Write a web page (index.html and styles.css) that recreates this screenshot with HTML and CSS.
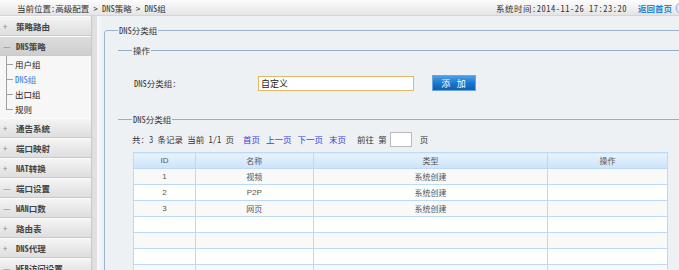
FILE: index.html
```html
<!DOCTYPE html>
<html lang="zh-CN">
<head>
    <meta charset="UTF-8">
    <title>DNS组</title>
    <link rel="stylesheet" href="styles.css">
</head>
<body>
<div class="page">
    <div class="topbar">
        <span class="crumb">当前位置:高级配置 &gt; DNS策略 &gt; DNS组</span>
        <span class="topright">
            <span class="systime">系统时间:2014-11-26 17:23:20</span>
            <a class="home" href="#">返回首页</a>
            <svg class="home-icon" width="12" height="12" viewBox="0 0 12 12">
                <circle cx="6" cy="6" r="5" fill="#d6e9fa" stroke="#7db6e6"/>
            </svg>
        </span>
    </div>

    <div class="wrap">
        <div class="sidebar">
            <div class="nav-item"><span class="ico">+</span>策略路由</div>
            <div class="nav-item open"><span class="ico">—</span>DNS策略</div>
            <ul class="subnav">
                <li>用户组</li>
                <li class="active">DNS组</li>
                <li>出口组</li>
                <li>规则</li>
            </ul>
            <div class="nav-item"><span class="ico">+</span>通告系统</div>
            <div class="nav-item"><span class="ico">+</span>端口映射</div>
            <div class="nav-item"><span class="ico">+</span>NAT转换</div>
            <div class="nav-item"><span class="ico">—</span>端口设置</div>
            <div class="nav-item"><span class="ico">—</span>WAN口数</div>
            <div class="nav-item"><span class="ico">+</span>路由表</div>
            <div class="nav-item"><span class="ico">+</span>DNS代理</div>
            <div class="nav-item"><span class="ico">—</span>WEB访问设置</div>
        </div>
        <div class="splitter"></div>

        <div class="main">
            <fieldset class="box">
                <legend>DNS分类组</legend>

                <fieldset class="section">
                    <legend>操作</legend>
                    <div class="form-row">
                        <span class="label">DNS分类组:</span>
                        <input class="txt" type="text" value="自定义">
                        <button class="btn">添 加</button>
                    </div>
                </fieldset>

                <fieldset class="section">
                    <legend>DNS分类组</legend>
                    <div class="pager">
                        <span class="total">共: 3 条记录 当前 1/1 页</span>
                        <a href="#" class="first">首页</a>
                        <a href="#">上一页</a>
                        <a href="#">下一页</a>
                        <a href="#">末页</a>
                        <span class="goto">前往 第</span>
                        <input class="page-no" type="text">
                        <span>页</span>
                    </div>

                    <table class="grid">
                        <tr>
                            <th class="c-id">ID</th>
                            <th class="c-name">名称</th>
                            <th class="c-type">类型</th>
                            <th class="c-op">操作</th>
                        </tr>
                        <tr><td>1</td><td>视频</td><td>系统创建</td><td></td></tr>
                        <tr><td>2</td><td>P2P</td><td>系统创建</td><td></td></tr>
                        <tr><td>3</td><td>网页</td><td>系统创建</td><td></td></tr>
                        <tr><td></td><td></td><td></td><td></td></tr>
                        <tr><td></td><td></td><td></td><td></td></tr>
                        <tr><td></td><td></td><td></td><td></td></tr>
                        <tr><td></td><td></td><td></td><td></td></tr>
                        <tr><td></td><td></td><td></td><td></td></tr>
                    </table>
                </fieldset>
            </fieldset>
        </div>
    </div>
</div>
</body>
</html>
```

FILE: styles.css
```css
* {
    box-sizing: border-box;
}
html, body {
    margin: 0;
    padding: 0;
    overflow: hidden;
}
body {
    font-family: "Noto Sans Mono CJK SC", "Liberation Mono", "Noto Sans CJK SC", monospace;
    font-size: 8.5px;
    color: #333;
    background: #eef1f4;
}
.page {
    width: 700px;
    height: 270px;
}
a {
    text-decoration: none;
}

/* barra superior */
.topbar {
    height: 16px;
    display: flex;
    align-items: center;
    justify-content: space-between;
    padding: 0 13px 0 17px;
    background: linear-gradient(#fdfdfd, #e4e4e4);
    border-bottom: 1px solid #d2d6da;
    line-height: 12px;
}
.topright {
    display: flex;
    align-items: center;
}
.systime {
    margin-right: 11px;
    letter-spacing: 0.5px;
}
.home {
    color: #2a86d4;
    font-weight: bold;
}
.home-icon {
    margin-left: 3px;
}

.wrap {
    display: flex;
    height: 254px;
}

/* menu lateral */
.sidebar {
    width: 91px;
    background: #f6f6f6;
}
.nav-item {
    height: 20px;
    line-height: 19px;
    padding-left: 3px;
    font-weight: bold;
    color: #444;
    background: linear-gradient(#f4f4f4, #dedede);
    border-top: 1px solid #fbfbfb;
    border-bottom: 1px solid #c9c9c9;
    white-space: nowrap;
}
.nav-item.open:nth-child(2) {
    background: linear-gradient(#dcdcdc, #cfcfcf);
}
.ico {
    display: inline-block;
    width: 13px;
    color: #888;
    font-weight: normal;
}
.subnav {
    list-style: none;
    margin: 0;
    padding: 1px 0;
    height: 62px;
    background: #f7f7f7;
    position: relative;
}
.subnav::before {
    content: "";
    position: absolute;
    left: 6px;
    top: 0;
    height: 54px;
    border-left: 1px solid #a0a0a0;
}
.subnav li {
    position: relative;
    height: 15px;
    line-height: 15px;
    padding-left: 15px;
    color: #222;
}
.subnav li::before {
    content: "";
    position: absolute;
    left: 6px;
    top: 7px;
    width: 7px;
    border-top: 1px solid #a0a0a0;
}
.subnav li.active {
    color: #2f7fd0;
}

.splitter {
    width: 9px;
    background: linear-gradient(to right, #c9c9c9 0, #c9c9c9 1px, #dedede 1px, #e2e2e2 6px, #f6f7f8 6px);
}

/* area principal */
.main {
    flex: 1;
    padding: 0 4px;
}
fieldset {
    margin: 0;
    min-width: 0;
}
legend {
    padding: 0 1px;
    line-height: 12px;
    color: #333;
}
.box {
    margin-top: 8px;
    padding: 0 0 0 13px;
    border: 1px solid #9bb3cb;
    border-radius: 3px;
    height: 260px;
}
.section {
    margin: 8px 0 0;
    padding: 0 0 0 14px;
    border: none;
    border-top: 1px solid #93aecb;
}
.section + .section {
    margin-top: 22px;
}
.form-row {
    display: flex;
    align-items: center;
    height: 16px;
    margin-top: 19px;
    padding-left: 2px;
}
.label {
    width: 124px;
}
.txt {
    width: 156px;
    height: 15px;
    padding: 0 2px;
    border: 1px solid #e2b866;
    font: inherit;
    font-size: 9px;
    color: #222;
    background: #fff;
}
.btn {
    margin-left: 18px;
    width: 44px;
    height: 16px;
    padding: 0;
    border: 1px solid #6aa6dc;
    background: linear-gradient(#4c9fe6, #1c78d0 50%, #0a5fb5);
    color: #fff;
    font: inherit;
    font-size: 9px;
    letter-spacing: 1px;
}

.pager {
    display: flex;
    align-items: center;
    height: 16px;
    margin-top: 6px;
    white-space: nowrap;
}
.total {
    white-space: pre;
}
.pager a {
    color: #3340d8;
    margin-left: 6px;
}
.pager a.first {
    margin-left: 9px;
}
.goto {
    margin-left: 11px;
}
.page-no {
    width: 22px;
    height: 15px;
    margin: 0 8px 0 3px;
    border: 1px solid #bbb;
    background: #fff;
}

.grid {
    margin: 5px 0 0 1px;
    width: 535px;
    border-collapse: collapse;
    font-family: "Liberation Sans", "Noto Sans CJK SC", sans-serif;
    font-size: 8px;
    color: #555;
}
.grid tr {
    height: 16px;
}
.grid th, .grid td {
    padding: 0;
    border: 1px solid #bcdaf5;
    text-align: center;
    font-weight: normal;
}
.grid th {
    background: linear-gradient(#e8f3fe, #cde3fa);
    height: 15px;
}
.grid tr:nth-child(even) td {
    background: #f9f9f9;
}
.grid tr:nth-child(odd) td {
    background: #fff;
}
.c-id { width: 62px; }
.c-name { width: 118px; }
.c-type { width: 235px; }
.c-op { width: 120px; }
```
